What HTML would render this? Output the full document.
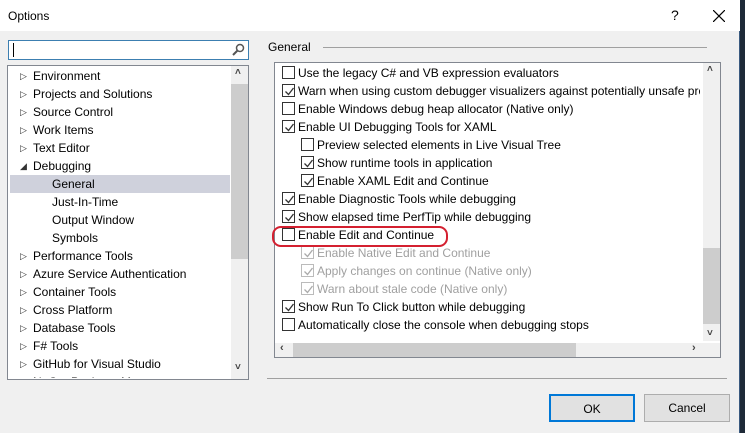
<!DOCTYPE html><html><head><style>
*{margin:0;padding:0;box-sizing:border-box}
body{width:745px;height:433px;background:#1e2a38;font-family:"Liberation Sans",sans-serif;font-size:12px;color:#000;position:relative;overflow:hidden}
.dlg{position:absolute;left:0;top:0;width:740px;height:433px;background:#f0f0f0;border-right:1px solid #3a5a80}
.title{position:absolute;left:0;top:0;width:740px;height:31px;background:#fff}
.abs{position:absolute}
.row{position:absolute;height:18px;line-height:18px;white-space:nowrap}
.tri{position:absolute;left:19px;font-size:9px;color:#333}
.cb{position:absolute;width:13px;height:13px;border:1px solid #333;background:#fff}
.cb.dis{border-color:#bbb}
.cb svg{position:absolute;left:1px;top:1px}
.btn{position:absolute;height:28px;border:1px solid #adadad;background:#e1e1e1;text-align:center;line-height:26px;font-size:12px}
.chev{position:absolute;font-size:10px;color:#444;font-weight:bold}
</style></head><body>
<div class="dlg">
<div class="title"></div>
<div class="abs" style="left:8px;top:9px;font-size:12px">Options</div>
<div class="abs" style="left:671px;top:7px;font-size:14px">?</div>
<svg class="abs" style="left:713px;top:10px" width="12" height="12"><path d="M0 0L12 12M12 0L0 12" stroke="#000" stroke-width="1.2"/></svg>

<div class="abs" style="left:8px;top:40px;width:241px;height:20px;background:#fff;border:1px solid #3c7fb1"></div>
<div class="abs" style="left:13px;top:43px;width:1px;height:14px;background:#000"></div>
<svg class="abs" style="left:232px;top:43px" width="13" height="13"><circle cx="8" cy="5" r="3.5" fill="none" stroke="#555" stroke-width="1.5"/><path d="M5.5 7.5L1 12" stroke="#555" stroke-width="2"/></svg>

<div class="abs" style="left:7px;top:65px;width:242px;height:315px;background:#fff;border:1px solid #828790;overflow:hidden">
<div class="abs" style="left:223px;top:0;width:17px;height:313px;background:#f0f0f0"></div>
<div class="abs" style="left:223px;top:18px;width:17px;height:175px;background:#cdcdcd"></div>
<div class="chev" style="left:227px;top:1px">&#708;</div>
<div class="chev" style="left:227px;top:296px">&#709;</div>
<div class="abs" style="left:2px;top:109px;width:220px;height:18px;background:#cfd1dc"></div>
<div class="abs" style="left:12px;top:1px;width:210px;height:311px;overflow:hidden;font-size:12px">
<div class="row" style="top:0;left:0"><span class="tri" style="left:0">&#9655;</span><span style="margin-left:13px">Environment</span></div>
<div class="row" style="top:18px;left:0"><span class="tri" style="left:0">&#9655;</span><span style="margin-left:13px">Projects and Solutions</span></div>
<div class="row" style="top:36px;left:0"><span class="tri" style="left:0">&#9655;</span><span style="margin-left:13px">Source Control</span></div>
<div class="row" style="top:54px;left:0"><span class="tri" style="left:0">&#9655;</span><span style="margin-left:13px">Work Items</span></div>
<div class="row" style="top:72px;left:0"><span class="tri" style="left:0">&#9655;</span><span style="margin-left:13px">Text Editor</span></div>
<div class="row" style="top:90px;left:0"><span class="tri" style="left:0">&#9698;</span><span style="margin-left:13px">Debugging</span></div>
<div class="row" style="top:108px;left:32px">General</div>
<div class="row" style="top:126px;left:32px">Just-In-Time</div>
<div class="row" style="top:144px;left:32px">Output Window</div>
<div class="row" style="top:162px;left:32px">Symbols</div>
<div class="row" style="top:180px;left:0"><span class="tri" style="left:0">&#9655;</span><span style="margin-left:13px">Performance Tools</span></div>
<div class="row" style="top:198px;left:0"><span class="tri" style="left:0">&#9655;</span><span style="margin-left:13px">Azure Service Authentication</span></div>
<div class="row" style="top:216px;left:0"><span class="tri" style="left:0">&#9655;</span><span style="margin-left:13px">Container Tools</span></div>
<div class="row" style="top:234px;left:0"><span class="tri" style="left:0">&#9655;</span><span style="margin-left:13px">Cross Platform</span></div>
<div class="row" style="top:252px;left:0"><span class="tri" style="left:0">&#9655;</span><span style="margin-left:13px">Database Tools</span></div>
<div class="row" style="top:270px;left:0"><span class="tri" style="left:0">&#9655;</span><span style="margin-left:13px">F# Tools</span></div>
<div class="row" style="top:288px;left:0"><span class="tri" style="left:0">&#9655;</span><span style="margin-left:13px">GitHub for Visual Studio</span></div>
<div class="row" style="top:306px;left:0"><span class="tri" style="left:0">&#9655;</span><span style="margin-left:13px">NuGet Package Manager</span></div>
</div>
</div>

<div class="abs" style="left:268px;top:40px">General</div>
<div class="abs" style="left:323px;top:47px;width:384px;height:1px;background:#a0a0a0"></div>

<div class="abs" style="left:274px;top:62px;width:447px;height:296px;background:#fff;border:1px solid #828790">
<div class="abs" style="left:0;top:280px;width:428px;height:14px;background:#f0f0f0"></div>
<div class="abs" style="left:18px;top:280px;width:283px;height:14px;background:#cdcdcd"></div>
<div class="chev" style="left:5px;top:279px;font-size:11px">&#8249;</div>
<div class="abs" style="left:428px;top:280px;width:17px;height:14px;background:#f0f0f0"></div>
<div class="chev" style="left:417px;top:279px;font-size:11px">&#8250;</div>
</div>

<div class="abs" style="left:267px;top:378px;width:460px;height:1px;background:#a0a0a0"></div>
<div class="btn" style="left:549px;top:394px;width:86px;border:2px solid #0078d7">OK</div>
<div class="btn" style="left:644px;top:394px;width:86px">Cancel</div>
</div>
<div class="abs" style="left:0;top:0;width:700px;height:340px;overflow:hidden">
<div class="cb" style="left:282px;top:66px"></div><div class="row" style="left:298px;top:64px">Use the legacy C# and VB expression evaluators</div>
<div class="cb" style="left:282px;top:84px"><svg width="11" height="11"><path d="M1.5 5.5L4.5 8.5L9.5 2" fill="none" stroke="#333" stroke-width="1.3"/></svg></div><div class="row" style="left:298px;top:82px">Warn when using custom debugger visualizers against potentially unsafe processes</div>
<div class="cb" style="left:282px;top:102px"></div><div class="row" style="left:298px;top:100px">Enable Windows debug heap allocator (Native only)</div>
<div class="cb" style="left:282px;top:120px"><svg width="11" height="11"><path d="M1.5 5.5L4.5 8.5L9.5 2" fill="none" stroke="#333" stroke-width="1.3"/></svg></div><div class="row" style="left:298px;top:118px">Enable UI Debugging Tools for XAML</div>
<div class="cb" style="left:301px;top:138px"></div><div class="row" style="left:317px;top:136px">Preview selected elements in Live Visual Tree</div>
<div class="cb" style="left:301px;top:156px"><svg width="11" height="11"><path d="M1.5 5.5L4.5 8.5L9.5 2" fill="none" stroke="#333" stroke-width="1.3"/></svg></div><div class="row" style="left:317px;top:154px">Show runtime tools in application</div>
<div class="cb" style="left:301px;top:174px"><svg width="11" height="11"><path d="M1.5 5.5L4.5 8.5L9.5 2" fill="none" stroke="#333" stroke-width="1.3"/></svg></div><div class="row" style="left:317px;top:172px">Enable XAML Edit and Continue</div>
<div class="cb" style="left:282px;top:192px"><svg width="11" height="11"><path d="M1.5 5.5L4.5 8.5L9.5 2" fill="none" stroke="#333" stroke-width="1.3"/></svg></div><div class="row" style="left:298px;top:190px">Enable Diagnostic Tools while debugging</div>
<div class="cb" style="left:282px;top:210px"><svg width="11" height="11"><path d="M1.5 5.5L4.5 8.5L9.5 2" fill="none" stroke="#333" stroke-width="1.3"/></svg></div><div class="row" style="left:298px;top:208px">Show elapsed time PerfTip while debugging</div>
<div class="cb" style="left:282px;top:228px"></div><div class="row" style="left:298px;top:226px">Enable Edit and Continue</div>
<div class="cb dis" style="left:301px;top:246px"><svg width="11" height="11"><path d="M1.5 5.5L4.5 8.5L9.5 2" fill="none" stroke="#aaa" stroke-width="1.3"/></svg></div><div class="row" style="left:317px;top:244px;color:#a0a0a0">Enable Native Edit and Continue</div>
<div class="cb dis" style="left:301px;top:264px"><svg width="11" height="11"><path d="M1.5 5.5L4.5 8.5L9.5 2" fill="none" stroke="#aaa" stroke-width="1.3"/></svg></div><div class="row" style="left:317px;top:262px;color:#a0a0a0">Apply changes on continue (Native only)</div>
<div class="cb dis" style="left:301px;top:282px"><svg width="11" height="11"><path d="M1.5 5.5L4.5 8.5L9.5 2" fill="none" stroke="#aaa" stroke-width="1.3"/></svg></div><div class="row" style="left:317px;top:280px;color:#a0a0a0">Warn about stale code (Native only)</div>
<div class="cb" style="left:282px;top:300px"><svg width="11" height="11"><path d="M1.5 5.5L4.5 8.5L9.5 2" fill="none" stroke="#333" stroke-width="1.3"/></svg></div><div class="row" style="left:298px;top:298px">Show Run To Click button while debugging</div>
<div class="cb" style="left:282px;top:318px"></div><div class="row" style="left:298px;top:316px">Automatically close the console when debugging stops</div>
</div>
<div class="abs" style="left:703px;top:63px;width:17px;height:278px;background:#f0f0f0"></div>
<div class="abs" style="left:703px;top:248px;width:17px;height:76px;background:#cdcdcd"></div>
<div class="chev" style="left:707px;top:64px">&#708;</div>
<div class="chev" style="left:707px;top:328px">&#709;</div>
<div class="abs" style="left:272px;top:226px;width:176px;height:21px;border:2px solid #d42030;border-radius:9px"></div>
</body></html>
